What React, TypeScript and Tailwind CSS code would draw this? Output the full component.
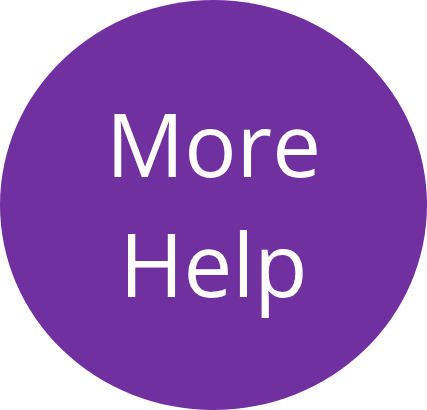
export default function App() {
  return (
    <div className="w-[427px] h-[410px] bg-white">
      <div className="w-[427px] h-[410px] rounded-[50%] bg-[#7030a0] flex items-center justify-center pb-[4px]">
        <div
          className="text-white text-center text-[87px] leading-[120px] font-normal"
          style={{ fontFamily: '"Open Sans", "Noto Sans", sans-serif' }}
        >
          More
          <br />
          Help
        </div>
      </div>
    </div>
  );
}
